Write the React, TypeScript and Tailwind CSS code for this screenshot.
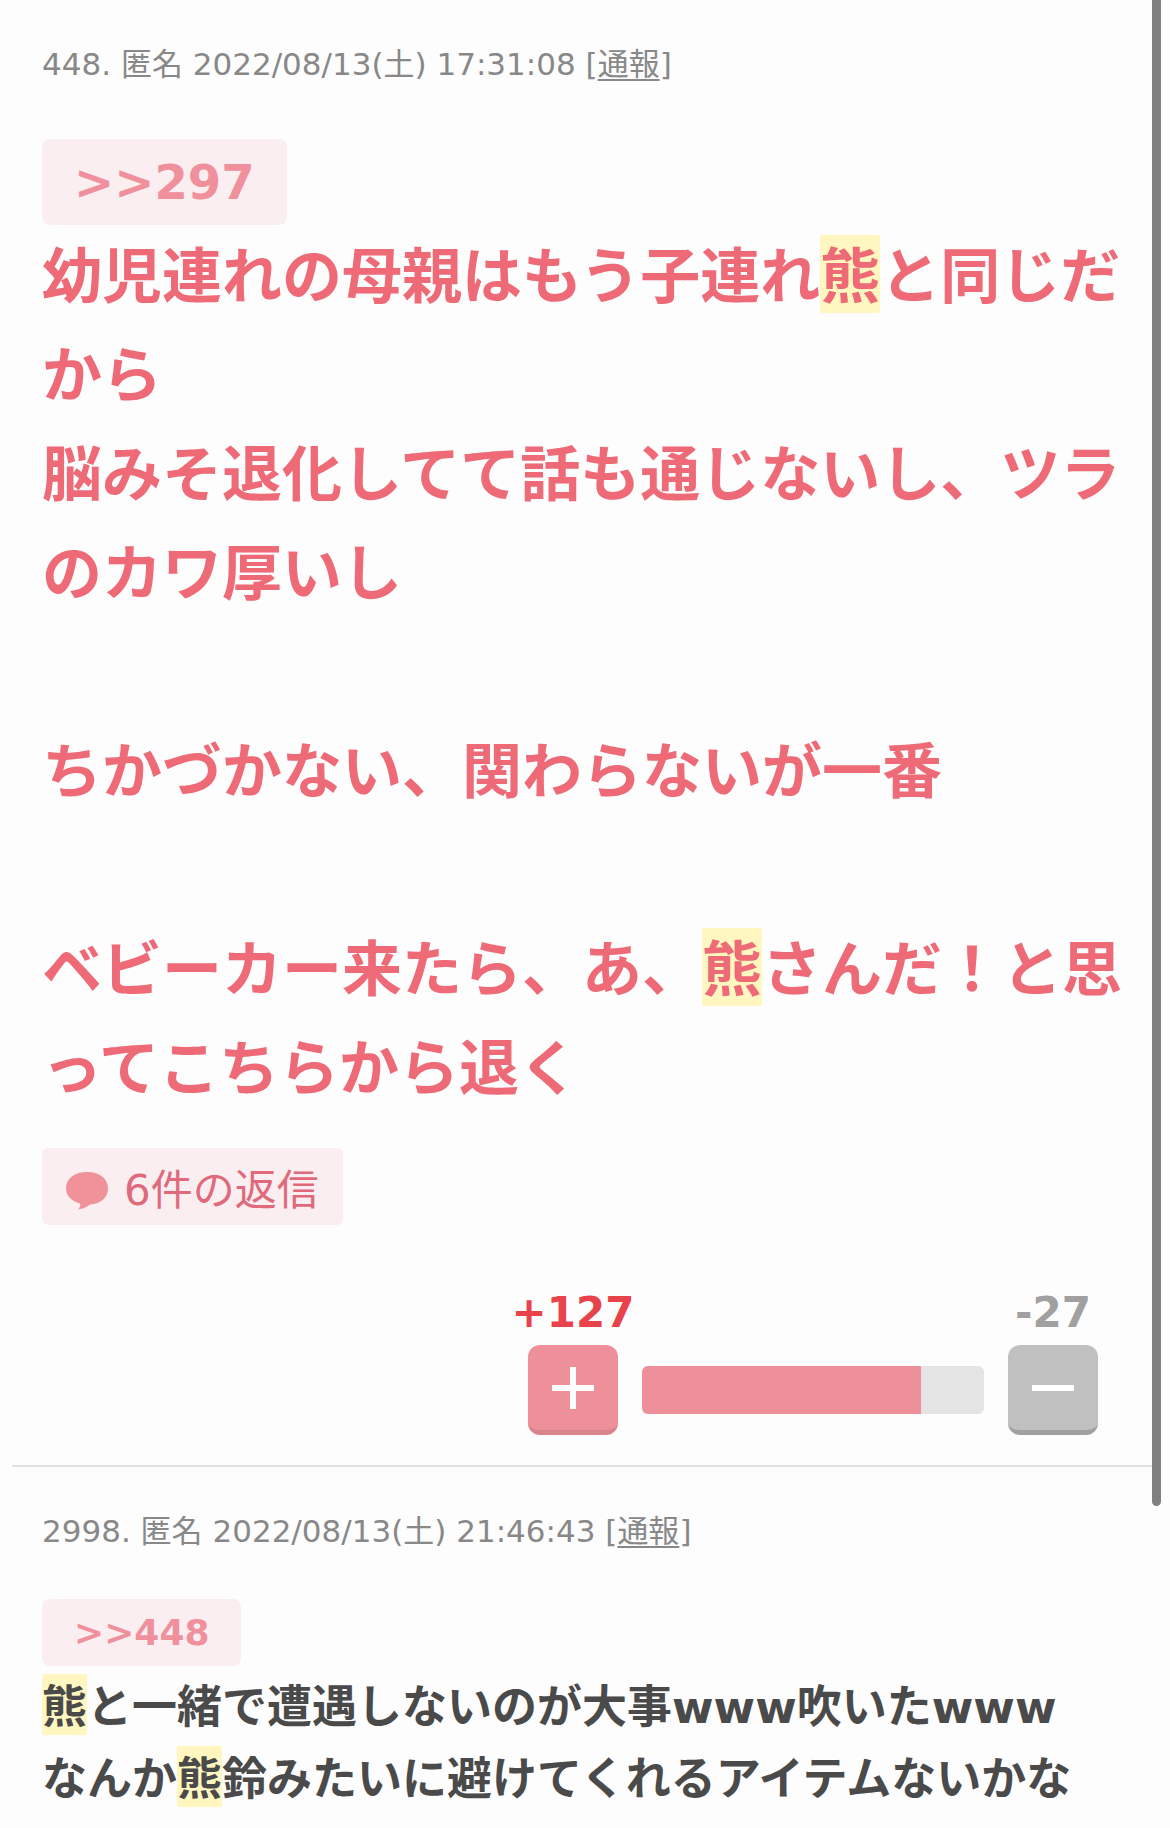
import type { ReactNode } from "react"

type CommentProps = {
  id: number
  date: string
  children: ReactNode
}

function Bear() {
  return <mark className="rounded-xs bg-[#fff7bf] pt-[7px] pb-px text-inherit">熊</mark>
}

function Comment({ id, date, children }: CommentProps) {
  return (
    <article className="px-[30px] pt-9">
      <header className="text-[31px] leading-[56px] text-[#888888]">
        {id}. 匿名 {date} [
        <a href="#report" className="underline decoration-2 underline-offset-4">
          通報
        </a>
        ]
      </header>
      {children}
    </article>
  )
}

function VoteIcon({ plus = false }: { plus?: boolean }) {
  return (
    <svg viewBox="0 0 42 42" className="h-[42px] w-[42px]" fill="none" stroke="#fff" strokeWidth="6" aria-hidden="true">
      <path d="M0 21h42" />
      {plus && <path d="M21 0v42" />}
    </svg>
  )
}

function Votes({ plus, minus }: { plus: number; minus: number }) {
  const share = (plus / (plus + minus)) * 100 - 1

  return (
    <div className="mt-[60px] flex items-end justify-end gap-6 pr-[30px]">
      <div className="flex w-[90px] flex-col items-center gap-1">
        <span className="text-[42px] leading-[56px] font-bold text-[#e8434b]">+{plus}</span>
        <button
          aria-label="プラス"
          className="flex h-[90px] w-full items-center justify-center rounded-xl border-b-[5px] border-[#d9838c] bg-[#ee9099]"
        >
          <VoteIcon plus />
        </button>
      </div>
      <div className="mb-[21px] h-12 w-[342px] overflow-hidden rounded-md bg-[#e4e4e4]">
        <div className="h-full bg-[#ee9099]" style={{ width: `${share}%` }} />
      </div>
      <div className="flex w-[90px] flex-col items-center gap-1">
        <span className="text-[42px] leading-[56px] font-bold text-[#a0a0a0]">-{minus}</span>
        <button
          aria-label="マイナス"
          className="flex h-[90px] w-full items-center justify-center rounded-xl border-b-[5px] border-[#a0a0a0] bg-[#c0c0c0]"
        >
          <VoteIcon />
        </button>
      </div>
    </div>
  )
}

export default function App() {
  return (
    <div
      lang="ja"
      className="relative min-h-screen overflow-hidden bg-[#fdfdfd] px-3 font-['DejaVu_Sans','Noto_Sans_CJK_JP',sans-serif]"
    >
      <Comment id={448} date="2022/08/13(土) 17:31:08">
        <a
          href="#comment-297"
          className="mt-[47px] flex h-[86px] w-fit items-center rounded-lg bg-[#faeef1] px-8 text-5xl font-bold text-[#f0909c]"
        >
          &gt;&gt;297
        </a>
        <p className="mt-[3px] text-[60px] leading-[99px] font-bold break-all text-[#ed6a76]">
          幼児連れの母親はもう子連れ
          <Bear />
          と同じだから
          <br />
          脳みそ退化してて話も通じないし、ツラのカワ厚いし
          <br />
          <br />
          ちかづかない、関わらないが一番
          <br />
          <br />
          ベビーカー来たら、あ、
          <Bear />
          さんだ！と思ってこちらから退く
        </p>
        <button className="mt-[29px] flex h-[77px] items-center gap-4 rounded-md bg-[#faeef1] px-6 pt-2 text-[42px] text-[#e0697c]">
          <svg viewBox="0 0 42 38" className="h-[38px] w-[42px]" fill="#f1929a" aria-hidden="true">
            <path d="M21 0C33 0 42 6 42 16.500C42 26 34 32 24 32.500C21 35 17 37 12 37.500C14 35.500 14.500 33.500 14 31.500C6 29.500 0 24 0 16.500C0 6 9 0 21 0Z" />
          </svg>
          6件の返信
        </button>
        <Votes plus={127} minus={27} />
      </Comment>

      <hr className="mt-[30px] border-t-2 border-[#e0e0e0]" />

      <Comment id={2998} date="2022/08/13(土) 21:46:43">
        <a
          href="#comment-448"
          className="mt-10 flex h-[67px] w-fit items-center rounded-lg bg-[#faeef1] px-8 text-4xl font-bold text-[#f0909c]"
        >
          &gt;&gt;448
        </a>
        <p className="mt-[6px] text-[45px] leading-[72px] font-bold text-[#4a4a4a]">
          <Bear />
          と一緒で遭遇しないのが大事www吹いたwww
          <br />
          なんか
          <Bear />
          鈴みたいに避けてくれるアイテムないかな
        </p>
      </Comment>

      {/* scroll thumb */}
      <div className="absolute top-0 right-[9px] h-[1506px] w-[9px] rounded-b-full bg-[#808080]" />
    </div>
  )
}
